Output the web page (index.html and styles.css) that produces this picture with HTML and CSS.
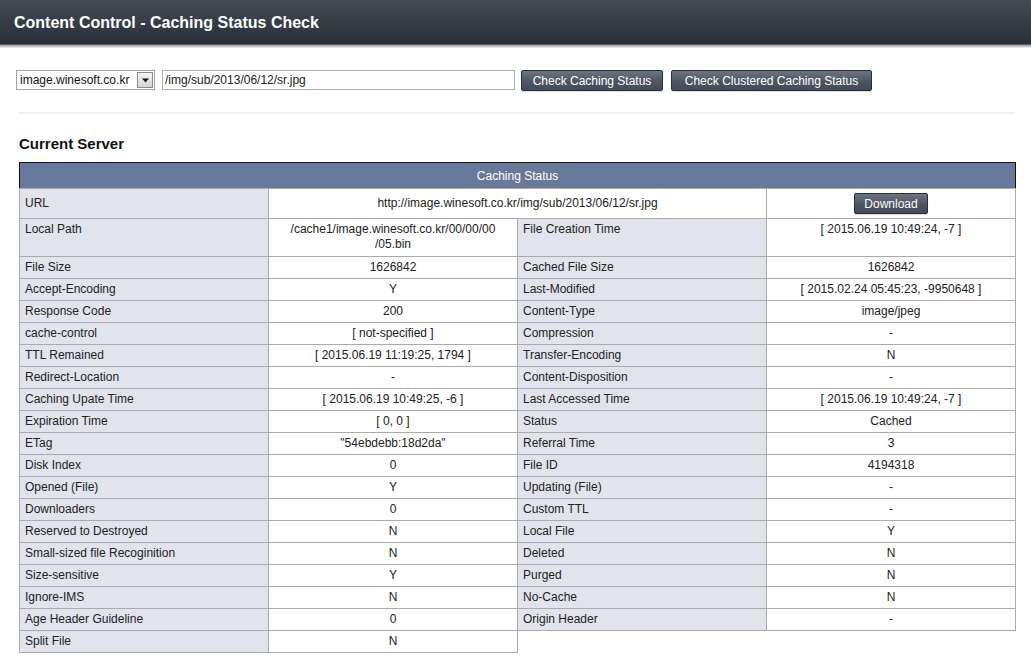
FILE: index.html
```html
<!DOCTYPE html>
<html>
<head>
<meta charset="utf-8">
<link rel="stylesheet" href="styles.css">
</head>
<body>
<div class="topbar"><h1>Content Control - Caching Status Check</h1></div>
<div class="page">
  <div class="controls">
    <div class="fake-select"><span class="sel-text">image.winesoft.co.kr</span><span class="sel-arrow"><svg width="9" height="5" viewBox="0 0 9 5"><path d="M1 0.5h7L4.5 4.5z" fill="#111"/></svg></span></div>
    <div class="path-input">/img/sub/2013/06/12/sr.jpg</div>
    <button class="btn">Check Caching Status</button>
    <button class="btn">Check Clustered Caching Status</button>
  </div>
  <div class="sep"></div>
  <h2 class="section">Current Server</h2>
  <table class="status">
    <colgroup><col class="c"><col class="c"><col class="c"><col class="c"></colgroup>
    <thead><tr><th colspan="4">Caching Status</th></tr></thead>
    <tbody>
      <tr class="url-row"><td class="k">URL</td><td class="v url" colspan="2">http://image.winesoft.co.kr/img/sub/2013/06/12/sr.jpg</td><td class="v"><button class="btn dl">Download</button></td></tr>
      <tr class="tall"><td class="k">Local Path</td><td class="v">/cache1/image.winesoft.co.kr/00/00/00<wbr>/05.bin</td><td class="k">File Creation Time</td><td class="v">[ 2015.06.19 10:49:24, -7 ]</td></tr>
      <tr><td class="k">File Size</td><td class="v">1626842</td><td class="k">Cached File Size</td><td class="v">1626842</td></tr>
      <tr><td class="k">Accept-Encoding</td><td class="v">Y</td><td class="k">Last-Modified</td><td class="v">[ 2015.02.24 05:45:23, -9950648 ]</td></tr>
      <tr><td class="k">Response Code</td><td class="v">200</td><td class="k">Content-Type</td><td class="v">image/jpeg</td></tr>
      <tr><td class="k">cache-control</td><td class="v">[ not-specified ]</td><td class="k">Compression</td><td class="v">-</td></tr>
      <tr><td class="k">TTL Remained</td><td class="v">[ 2015.06.19 11:19:25, 1794 ]</td><td class="k">Transfer-Encoding</td><td class="v">N</td></tr>
      <tr><td class="k">Redirect-Location</td><td class="v">-</td><td class="k">Content-Disposition</td><td class="v">-</td></tr>
      <tr><td class="k">Caching Upate Time</td><td class="v">[ 2015.06.19 10:49:25, -6 ]</td><td class="k">Last Accessed Time</td><td class="v">[ 2015.06.19 10:49:24, -7 ]</td></tr>
      <tr><td class="k">Expiration Time</td><td class="v">[ 0, 0 ]</td><td class="k">Status</td><td class="v">Cached</td></tr>
      <tr><td class="k">ETag</td><td class="v">"54ebdebb:18d2da"</td><td class="k">Referral Time</td><td class="v">3</td></tr>
      <tr><td class="k">Disk Index</td><td class="v">0</td><td class="k">File ID</td><td class="v">4194318</td></tr>
      <tr><td class="k">Opened (File)</td><td class="v">Y</td><td class="k">Updating (File)</td><td class="v">-</td></tr>
      <tr><td class="k">Downloaders</td><td class="v">0</td><td class="k">Custom TTL</td><td class="v">-</td></tr>
      <tr><td class="k">Reserved to Destroyed</td><td class="v">N</td><td class="k">Local File</td><td class="v">Y</td></tr>
      <tr><td class="k">Small-sized file Recoginition</td><td class="v">N</td><td class="k">Deleted</td><td class="v">N</td></tr>
      <tr><td class="k">Size-sensitive</td><td class="v">Y</td><td class="k">Purged</td><td class="v">N</td></tr>
      <tr><td class="k">Ignore-IMS</td><td class="v">N</td><td class="k">No-Cache</td><td class="v">N</td></tr>
      <tr><td class="k">Age Header Guideline</td><td class="v">0</td><td class="k">Origin Header</td><td class="v">-</td></tr>
      <tr><td class="k">Split File</td><td class="v">N</td><td class="none" colspan="2"></td></tr>
    </tbody>
  </table>
</div>
</body>
</html>
```
FILE: styles.css
```css
* { box-sizing: border-box; }
html, body { margin: 0; padding: 0; background: #fff; }
body { font-family: "Liberation Sans", Arial, sans-serif; font-size: 12px; color: #222; }

.topbar {
  height: 48px;
  background: linear-gradient(#434a54 0, #2a3039 44px, #8c8f93 45px, #b9bbbd 46px, #dcdcdc 47px, #f0f0f0 48px);
  padding: 0 14px;
}
.topbar h1 {
  margin: 0;
  line-height: 46px;
  font-size: 16px;
  font-weight: bold;
  color: #fff;
  letter-spacing: 0;
}

.page { padding: 22px 16px 0 19px; }

.controls { display: flex; align-items: flex-start; margin-left: -3px; height: 21px; }
.fake-select {
  width: 139px; height: 20px;
  border: 1px solid #a5a5a5;
  display: flex; align-items: center; justify-content: space-between;
  padding: 0 1px 0 3px;
  font-size: 12px; color: #111;
}
.sel-arrow {
  width: 16px; height: 16px;
  border: 1px solid #8a8a8a;
  background: linear-gradient(#f4f4f4, #d4d4d4);
  display: flex; align-items: center; justify-content: center;
}
.path-input {
  margin-left: 7px;
  width: 353px; height: 20px;
  border: 1px solid #b0b0b0;
  padding: 2px 2px;
  font-size: 12px; color: #222;
  line-height: 15px;
}
.btn {
  font-family: "Liberation Sans", Arial, sans-serif;
  font-size: 12px;
  color: #fff;
  height: 21px;
  padding: 0 8px;
  border: 1px solid #2a2e36;
  border-radius: 2px;
  background: linear-gradient(#6c7484, #4d5462 55%, #444b58);
  box-shadow: 0 1px 1px rgba(0,0,0,0.15);
  cursor: pointer;
}
.controls .btn:nth-of-type(1) { margin-left: 6px; width: 142px; }
.controls .btn:nth-of-type(2) { margin-left: 8px; width: 201px; }

.sep { height: 2px; background: #f0f0f0; margin: 21px 0 0 0; width: 996px; }

.section { margin: 21px 0 9px; font-size: 15px; font-weight: bold; color: #111; line-height: 18px; }

.status { border-collapse: collapse; table-layout: fixed; width: 997px; }
.status col.c { width: 249px; }
.status th {
  background: #687a9b;
  color: #fff;
  font-weight: normal;
  font-size: 12px;
  height: 26px;
  border: 1px solid #111;
  border-bottom: 1px solid #aaa;
  text-align: center;
}
.status td {
  border: 1px solid #aaa;
  padding: 3px 5px 3px 5px;
  line-height: 15px;
  height: 22px;
  vertical-align: top;
  font-size: 12px;
  color: #222;
}
.status td.k { background: #e1e4ed; text-align: left; }
.status td.v { background: #fff; text-align: center; }
.status td.none { border: none; border-left: 1px solid #aaa; background: #fff; }
.status tr.url-row td { height: 30px; vertical-align: middle; }
.status tr.url-row td.k { vertical-align: middle; }
.status tr.tall td { height: 38px; }
.status tr.tall td.v { padding-left: 10px; padding-right: 10px; }
.btn.dl { height: 21px; width: 74px; padding: 0; font-size: 12px; }
```
